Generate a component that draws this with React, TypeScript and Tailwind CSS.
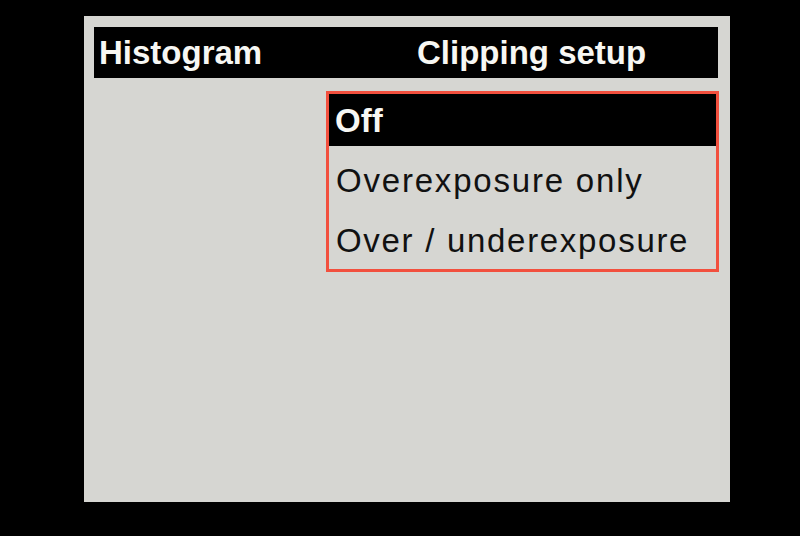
export default function App() {
  const font = { fontFamily: '"Liberation Sans", Arial, sans-serif' };
  return (
    <div className="w-[800px] h-[536px] bg-black overflow-hidden" style={font}>
      <div className="pt-[16px] pl-[84px]">
        <div className="w-[646px] h-[486px] bg-[#d6d6d2] flex flex-col pt-[11px] pl-[10px]">
          <div className="w-[624px] h-[51px] bg-black flex items-center text-[#f7f7f3] font-bold text-[33px] leading-none">
            <span className="w-[323px] pl-[5px]">Histogram</span>
            <span>Clipping setup</span>
          </div>
          <div className="mt-[13px] ml-[232px] w-[393px] h-[181px] border-[3px] border-[#f2503e] flex flex-col gap-[8px] pb-[3px]">
            <div className="h-[52px] bg-black flex items-center pl-[6px] text-[#f7f7f3] font-bold text-[33px] leading-none">
              Off
            </div>
            <div className="h-[52px] flex items-center pl-[7px] text-[#111111] text-[33px] tracking-[1.8px] leading-none">
              Overexposure only
            </div>
            <div className="h-[52px] flex items-center pl-[7px] text-[#111111] text-[33px] tracking-[1.7px] leading-none">
              Over / underexposure
            </div>
          </div>
        </div>
      </div>
    </div>
  );
}
